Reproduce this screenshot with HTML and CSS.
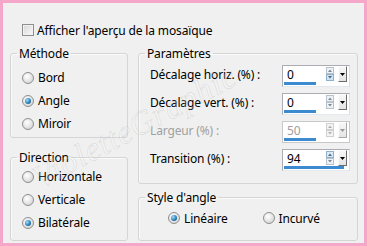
FILE: index.html
```html
<!DOCTYPE html>
<html lang="fr">
<head>
    <meta charset="UTF-8">
    <meta name="viewport" content="width=device-width, initial-scale=1.0">
    <title>Mosaïque</title>
    <link rel="stylesheet" href="styles.css">
</head>
<body>
    <div class="frame">
        <div class="panel">
            <div class="check-row">
                <span class="checkbox"></span>
                <span>Afficher l'aperçu de la mosaïque</span>
            </div>

            <div class="columns">
                <div class="col col-left">
                    <fieldset class="group group-method">
                        <legend>Méthode</legend>
                        <div class="radio-row"><span class="radio"></span>Bord</div>
                        <div class="radio-row"><span class="radio checked"></span>Angle</div>
                        <div class="radio-row"><span class="radio"></span>Miroir</div>
                    </fieldset>
                    <fieldset class="group group-direction">
                        <legend>Direction</legend>
                        <div class="radio-row"><span class="radio"></span>Horizontale</div>
                        <div class="radio-row"><span class="radio"></span>Verticale</div>
                        <div class="radio-row"><span class="radio checked"></span>Bilatérale</div>
                    </fieldset>
                </div>

                <div class="col col-right">
                    <fieldset class="group group-params">
                        <legend>Paramètres</legend>
                        <div class="field-row">
                            <span class="field-label">Décalage horiz. (%) :</span>
                            <div class="spin">
                                <div class="spin-main">
                                    <span class="spin-value">0</span>
                                    <svg class="spin-arrows" width="8" height="14" viewBox="0 0 8 14">
                                        <rect x="0.5" y="0.5" width="7" height="6" fill="#eef2f6" stroke="#b9c3cc"/>
                                        <rect x="0.5" y="7.5" width="7" height="6" fill="#cfe3f3" stroke="#8fb1cc"/>
                                        <path d="M2 5 L4 2.5 L6 5 Z" fill="#7c8894"/>
                                        <path d="M2 9 L4 11.5 L6 9 Z" fill="#4d6a84"/>
                                    </svg>
                                    <span class="spin-drop">
                                        <svg width="5" height="3" viewBox="0 0 5 3"><path d="M0 0 H5 L2.5 3 Z" fill="#000"/></svg>
                                    </span>
                                </div>
                                <div class="spin-track"><div class="spin-bar" style="width: 50%"></div></div>
                            </div>
                        </div>
                        <div class="field-row">
                            <span class="field-label">Décalage vert. (%) :</span>
                            <div class="spin">
                                <div class="spin-main">
                                    <span class="spin-value">0</span>
                                    <svg class="spin-arrows" width="8" height="14" viewBox="0 0 8 14">
                                        <rect x="0.5" y="0.5" width="7" height="6" fill="#eef2f6" stroke="#b9c3cc"/>
                                        <rect x="0.5" y="7.5" width="7" height="6" fill="#eef2f6" stroke="#b9c3cc"/>
                                        <path d="M2 5 L4 2.5 L6 5 Z" fill="#7c8894"/>
                                        <path d="M2 9 L4 11.5 L6 9 Z" fill="#7c8894"/>
                                    </svg>
                                    <span class="spin-drop">
                                        <svg width="5" height="3" viewBox="0 0 5 3"><path d="M0 0 H5 L2.5 3 Z" fill="#000"/></svg>
                                    </span>
                                </div>
                                <div class="spin-track"><div class="spin-bar" style="width: 50%"></div></div>
                            </div>
                        </div>
                        <div class="field-row disabled">
                            <span class="field-label">Largeur (%) :</span>
                            <div class="spin">
                                <div class="spin-main">
                                    <span class="spin-value">50</span>
                                    <svg class="spin-arrows" width="8" height="14" viewBox="0 0 8 14">
                                        <rect x="0.5" y="0.5" width="7" height="6" fill="#f4f4f4" stroke="#cfcfcf"/>
                                        <rect x="0.5" y="7.5" width="7" height="6" fill="#f4f4f4" stroke="#cfcfcf"/>
                                        <path d="M2 5 L4 2.5 L6 5 Z" fill="#b0b0b0"/>
                                        <path d="M2 9 L4 11.5 L6 9 Z" fill="#b0b0b0"/>
                                    </svg>
                                    <span class="spin-drop">
                                        <svg width="5" height="3" viewBox="0 0 5 3"><path d="M0 0 H5 L2.5 3 Z" fill="#9a9a9a"/></svg>
                                    </span>
                                </div>
                                <div class="spin-track"><div class="spin-bar" style="width: 50%"></div></div>
                            </div>
                        </div>
                        <div class="field-row">
                            <span class="field-label">Transition (%) :</span>
                            <div class="spin">
                                <div class="spin-main">
                                    <span class="spin-value">94</span>
                                    <svg class="spin-arrows" width="8" height="14" viewBox="0 0 8 14">
                                        <rect x="0.5" y="0.5" width="7" height="6" fill="#dcebf7" stroke="#8fb1cc"/>
                                        <rect x="0.5" y="7.5" width="7" height="6" fill="#eef2f6" stroke="#b9c3cc"/>
                                        <path d="M2 5 L4 2.5 L6 5 Z" fill="#4d6a84"/>
                                        <path d="M2 9 L4 11.5 L6 9 Z" fill="#7c8894"/>
                                    </svg>
                                    <span class="spin-drop">
                                        <svg width="5" height="3" viewBox="0 0 5 3"><path d="M0 0 H5 L2.5 3 Z" fill="#000"/></svg>
                                    </span>
                                </div>
                                <div class="spin-track"><div class="spin-bar" style="width: 94%"></div></div>
                            </div>
                        </div>
                    </fieldset>

                    <fieldset class="group group-angle">
                        <legend>Style d'angle</legend>
                        <div class="angle-options">
                            <div class="radio-row"><span class="radio checked"></span>Linéaire</div>
                            <div class="radio-row"><span class="radio"></span>Incurvé</div>
                        </div>
                    </fieldset>
                </div>
            </div>

            <div class="watermark">VioletteGraphic</div>
        </div>
    </div>
</body>
</html>
```

FILE: styles.css
```css
body {
    margin: 0;
    padding: 0;
    font-family: "Noto Sans", "Open Sans", sans-serif;
    font-size: 12px;
    letter-spacing: -0.15px;
    color: #000;
}
.frame {
    width: 367px;
    height: 246px;
    box-sizing: border-box;
    padding: 3px;
    background: #f5a7c9;
}
.panel {
    position: relative;
    height: 100%;
    box-sizing: border-box;
    padding: 19px 6px 0 7px;
    background: #f0f0f0;
    overflow: hidden;
}

/* case à cocher du haut */
.check-row {
    display: flex;
    align-items: center;
    gap: 3px;
    height: 16px;
    padding-left: 12px;
}
.checkbox {
    width: 12px;
    height: 12px;
    box-sizing: border-box;
    border: 1px solid #8e8f8f;
    background: linear-gradient(135deg, #d6d6d6, #fbfbfb);
    box-shadow: inset 0 0 0 1px #f2f2f2;
}

/* colonnes */
.columns {
    display: flex;
    gap: 10px;
    margin-top: 8px;
}
.col {
    display: flex;
    flex-direction: column;
}
.col-left {
    width: 118px;
    gap: 12px;
}
.col-right {
    width: 220px;
    gap: 6px;
}

/* groupes */
.group {
    margin: 0;
    padding: 0;
    min-width: 0;
    box-sizing: border-box;
    border: 1px solid #d5d5d5;
    border-radius: 3px;
    box-shadow: inset 1px 1px 0 #fafafa;
}
.group legend {
    margin-left: 6px;
    padding: 0 2px;
    line-height: 15px;
}
.group-method {
    height: 92px;
    padding-top: 5px;
}
.group-direction {
    height: 91px;
}
.group-params {
    height: 138px;
    padding-top: 1px;
}
.group-angle {
    height: 51px;
    padding-top: 1px;
}

/* boutons radio */
.radio-row {
    display: flex;
    align-items: center;
    gap: 4px;
    height: 23px;
    padding-left: 11px;
}
.radio {
    display: flex;
    align-items: center;
    justify-content: center;
    width: 12px;
    height: 12px;
    box-sizing: border-box;
    border: 1px solid #8e8f8f;
    border-radius: 50%;
    background: radial-gradient(circle at 40% 35%, #ffffff, #d4d4d4 85%);
}
.radio.checked::after {
    content: '';
    width: 6px;
    height: 6px;
    border-radius: 50%;
    background: radial-gradient(circle at 35% 35%, #a6dcf7, #2a82bd 55%, #0e3e66);
}
.angle-options {
    display: flex;
    padding-left: 29px;
}
.angle-options .radio-row {
    width: 97px;
    height: 24px;
    padding-left: 0;
}

/* champs numériques */
.field-row {
    display: flex;
    align-items: center;
    height: 28px;
    padding-left: 11px;
    padding-right: 7px;
}
.field-label {
    flex: 1;
    padding-bottom: 3px;
}
.spin {
    display: flex;
    flex-direction: column;
    width: 68px;
    height: 22px;
    box-sizing: border-box;
    border: 1px solid #abadb3;
    border-right-color: #dbdfe6;
    border-bottom-color: #e3e9ef;
    background: #fff;
}
.spin-main {
    display: flex;
    align-items: center;
    flex: 1;
    min-height: 0;
}
.spin-value {
    flex: 1;
    padding-left: 4px;
    padding-top: 2px;
    line-height: 14px;
}
.spin-arrows {
    margin-right: 4px;
}
.spin-drop {
    display: flex;
    align-items: center;
    justify-content: center;
    width: 9px;
    height: 16px;
    margin-right: 2px;
    box-sizing: border-box;
    border: 1px solid #fdfdfd;
    border-right-color: #6b6b6b;
    border-bottom-color: #6b6b6b;
    background: linear-gradient(#f7f7f7, #e4e4e4);
}
.spin-track {
    flex-shrink: 0;
    height: 3px;
    margin: 0 1px 1px 1px;
}
.spin-bar {
    height: 100%;
    background: #3c8ad0;
}
.disabled .field-label,
.disabled .spin-value {
    color: #a0a0a0;
}
.disabled .spin {
    border-color: #c9c9c9;
}
.disabled .spin-drop {
    border-right-color: #a8a8a8;
    border-bottom-color: #a8a8a8;
}

/* filigrane */
.watermark {
    position: absolute;
    left: 132px;
    top: 124px;
    font-family: "Liberation Serif", serif;
    font-style: italic;
    font-size: 33px;
    letter-spacing: 1px;
    white-space: nowrap;
    color: rgba(255, 255, 255, 0.2);
    -webkit-text-stroke: 0.5px rgba(150, 150, 150, 0.3);
    transform: translate(-50%, -50%) rotate(-28deg);
    pointer-events: none;
}
```
